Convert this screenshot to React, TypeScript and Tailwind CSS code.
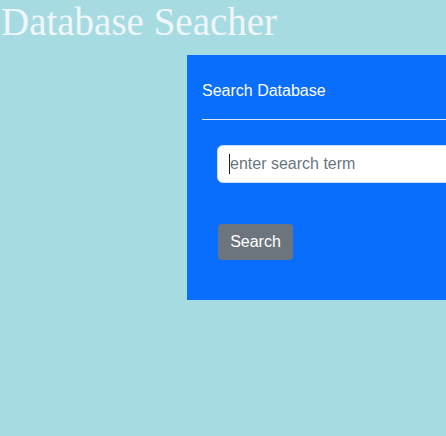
import { useState } from "react"

function App() {
  const [term, setTerm] = useState("")

  return (
    <div className="min-h-screen w-full overflow-hidden bg-[#a6dce1]">
      <h1 className="m-0 pt-[2px] pl-[1px] text-[39px] leading-[40px] text-[#f0f5fb] font-['Liberation_Serif',serif] whitespace-nowrap">
        Database Seacher
      </h1>

      {/* panel de busqueda */}
      <div className="ml-[187px] mt-[13px] w-[420px] bg-[#0a6efd] px-[15px] pt-[24px] pb-[40px] font-['Liberation_Sans',Arial,sans-serif]">
        <p className="text-[16px] leading-[24px] text-white">Search Database</p>
        <div className="mt-[16px] h-px bg-[#dbe8ff]"></div>
        <div className="mt-[25px] pl-[15px]">
          <div className="relative">
            <input
              value={term}
              onChange={(e) => setTerm(e.target.value)}
              placeholder="enter search term"
              className="block h-[38px] w-full rounded-[6px] border border-[#cfe0fb] bg-white px-[12px] text-[16px] text-[#212529] placeholder:text-[#6c757d] outline-none"
            />
            {/* cursor */}
            {term === "" && (
              <span className="pointer-events-none absolute left-[12px] top-[9px] h-[20px] w-px bg-[#212529]"></span>
            )}
          </div>
          <button className="mt-[41px] ml-px h-[36px] w-[75px] rounded-[4px] bg-[#6c757d] text-[16px] text-white">
            Search
          </button>
        </div>
      </div>
    </div>
  )
}

export default App
